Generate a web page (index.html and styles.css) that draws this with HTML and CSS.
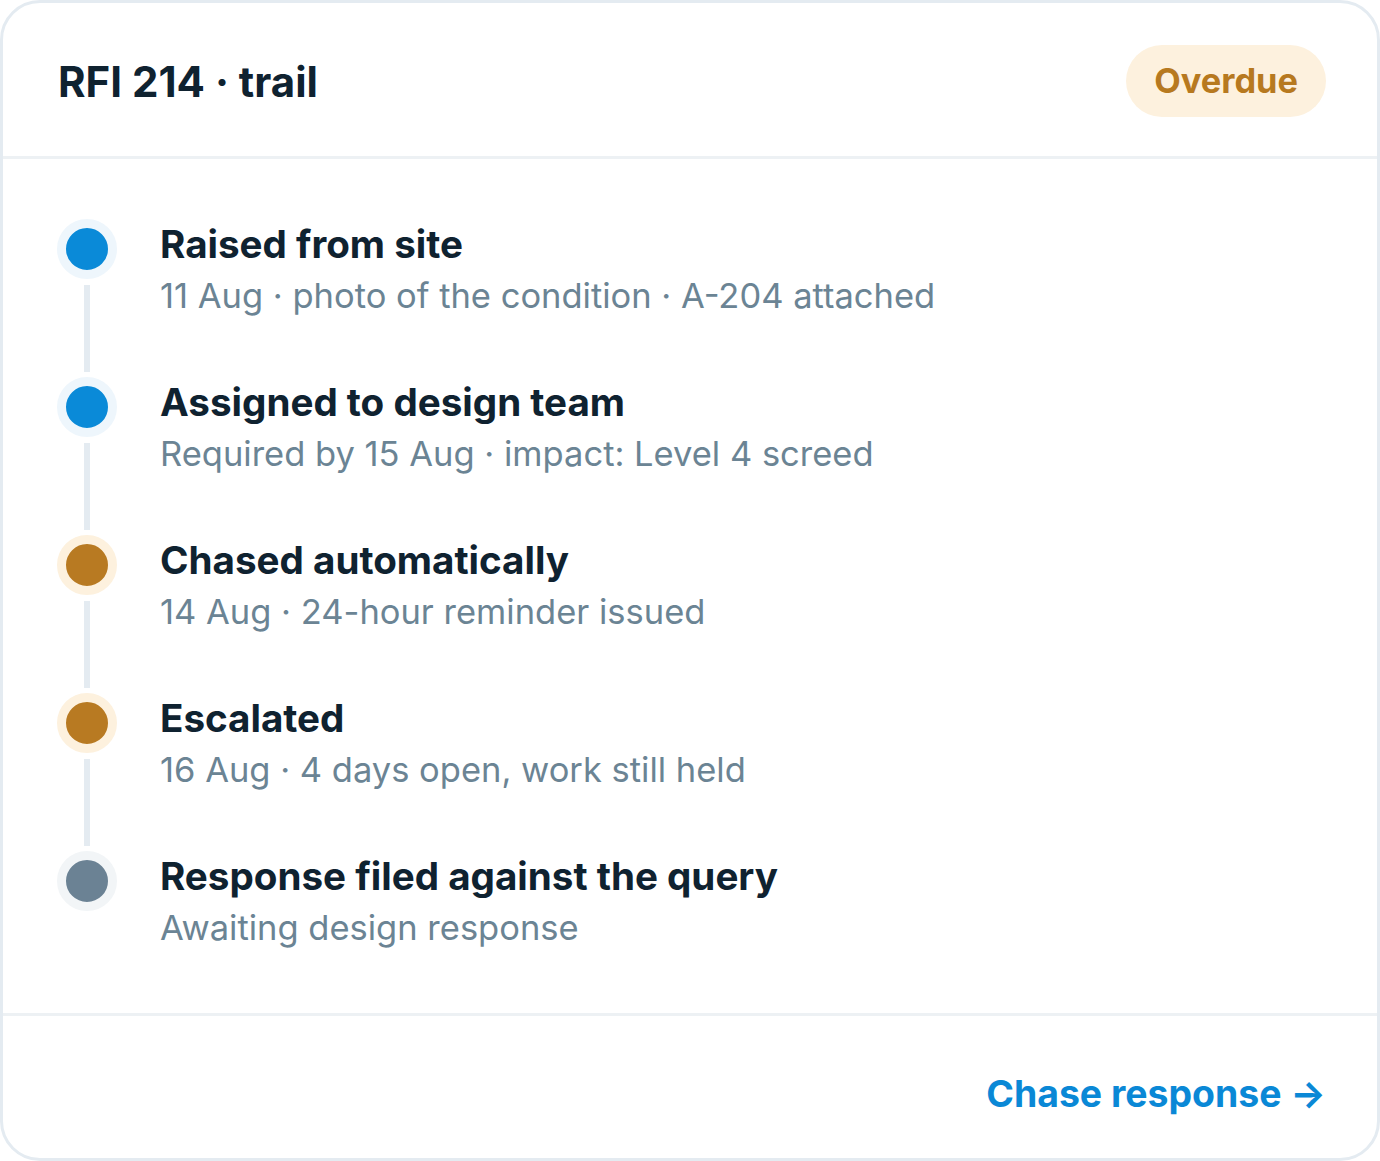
FILE: index.html
```html
<!DOCTYPE html>
<html lang="en">
<head>
    <meta charset="UTF-8">
    <meta name="viewport" content="width=device-width, initial-scale=1.0">
    <title>RFI 214 · trail</title>
    <link rel="stylesheet" href="styles.css">
</head>
<body>
    <div class="card">
        <div class="card-header">
            <h1>RFI 214 · trail</h1>
            <span class="badge">Overdue</span>
        </div>

        <ul class="trail">
            <li class="step">
                <div class="rail"><span class="dot blue"></span><span class="line"></span></div>
                <div class="step-text">
                    <div class="step-title">Raised from site</div>
                    <div class="step-meta">11 Aug · photo of the condition · A-204 attached</div>
                </div>
            </li>
            <li class="step">
                <div class="rail"><span class="dot blue"></span><span class="line"></span></div>
                <div class="step-text">
                    <div class="step-title">Assigned to design team</div>
                    <div class="step-meta">Required by 15 Aug · impact: Level 4 screed</div>
                </div>
            </li>
            <li class="step">
                <div class="rail"><span class="dot amber"></span><span class="line"></span></div>
                <div class="step-text">
                    <div class="step-title">Chased automatically</div>
                    <div class="step-meta">14 Aug · 24-hour reminder issued</div>
                </div>
            </li>
            <li class="step">
                <div class="rail"><span class="dot amber"></span><span class="line"></span></div>
                <div class="step-text">
                    <div class="step-title">Escalated</div>
                    <div class="step-meta">16 Aug · 4 days open, work still held</div>
                </div>
            </li>
            <li class="step last">
                <div class="rail"><span class="dot grey"></span></div>
                <div class="step-text">
                    <div class="step-title">Response filed against the query</div>
                    <div class="step-meta">Awaiting design response</div>
                </div>
            </li>
        </ul>

        <div class="card-footer">
            <a class="chase-link" href="#">Chase response →</a>
        </div>
    </div>
</body>
</html>
```

FILE: styles.css
```css
* {
    margin: 0;
    padding: 0;
    box-sizing: border-box;
}

body {
    font-family: 'Inter', 'Noto Sans', sans-serif;
    background: #fff;
    color: #0f2230;
}

.card {
    width: 1380px;
    height: 1161px;
    border: 3px solid #e4ebf1;
    border-radius: 40px;
    background: #fff;
    display: flex;
    flex-direction: column;
}

/* Header with title and status pill */
.card-header {
    height: 156px;
    display: flex;
    align-items: center;
    justify-content: space-between;
    padding: 3px 51px 0 55px;
    border-bottom: 3px solid #edf1f4;
}

h1 {
    font-size: 42px;
    font-weight: 700;
    color: #0f2230;
}

.badge {
    display: inline-block;
    height: 72px;
    line-height: 72px;
    padding: 0 28px;
    border-radius: 36px;
    background: #fdf1de;
    color: #b7791f;
    font-size: 34.4px;
    font-weight: 700;
}

/* Timeline */
.trail {
    list-style: none;
    flex: 1;
    padding: 60px 0 0 54px;
}

.step {
    display: flex;
    gap: 43px;
    height: 158px;
}

.step.last {
    height: auto;
}

.rail {
    width: 60px;
    display: flex;
    flex-direction: column;
    align-items: center;
}

.dot {
    width: 60px;
    height: 60px;
    border-radius: 50%;
    border: 9px solid;
    flex-shrink: 0;
}

.dot.blue { background: #0a8ad8; border-color: #eef6fc; }
.dot.amber { background: #b87a22; border-color: #fdf1de; }
.dot.grey { background: #6b8294; border-color: #f2f5f7; }

.line {
    flex: 1;
    width: 6px;
    margin: 6px 0 5px;
    background: #e4ebf1;
}

.step-text {
    padding-top: 1px;
}

.step-title {
    font-size: 38.6px;
    line-height: 48px;
    font-weight: 700;
    color: #0f2230;
}

.step-meta {
    margin-top: 8px;
    font-size: 34.5px;
    line-height: 40px;
    color: #6b8494;
}

/* Footer action */
.card-footer {
    height: 145px;
    border-top: 3px solid #edf1f4;
    display: flex;
    align-items: center;
    justify-content: flex-end;
    padding: 12px 51px 0 0;
}

.chase-link {
    font-size: 37.4px;
    font-weight: 700;
    color: #0a88d6;
    text-decoration: none;
}
```
